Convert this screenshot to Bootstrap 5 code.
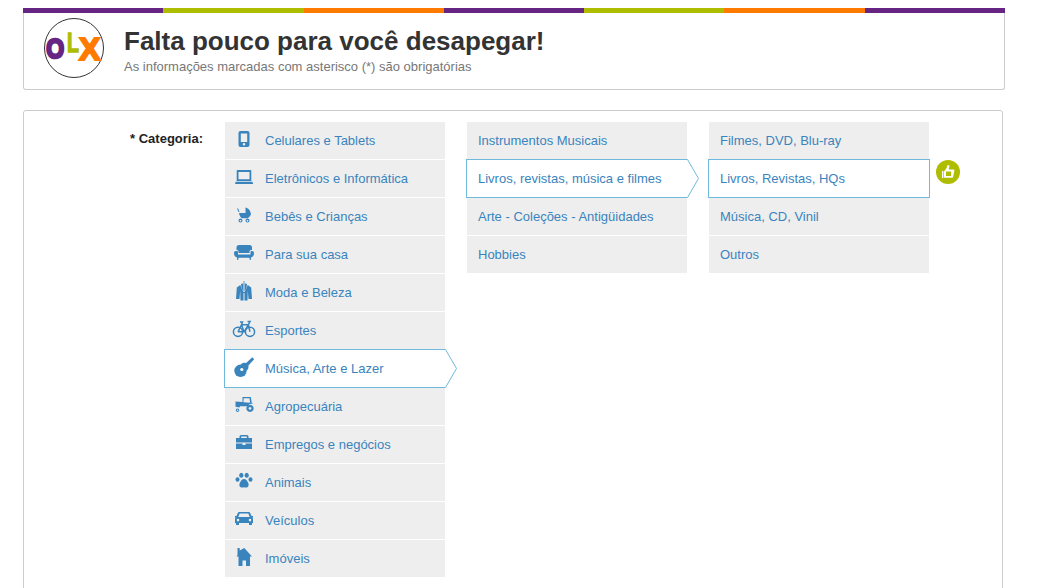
<!DOCTYPE html>
<html lang="pt-BR">

<head>
    <meta charset="UTF-8">
    <meta name="viewport" content="width=device-width, initial-scale=1.0">
    <title>Falta pouco para você desapegar!</title>
    <link href="https://cdn.jsdelivr.net/npm/bootstrap@5.3.0/dist/css/bootstrap.min.css" rel="stylesheet">
    <style>
        body {
            font-family: "Liberation Sans", Arial, sans-serif;
            font-size: 13px;
            color: #333;
            background: #fff;
        }

        .page-wrap {
            width: 982px;
            height: 580px;
            margin: 8px 0 0 23px;
            overflow: hidden;
        }

        .top-panel {
            width: 982px;
            height: 77px;
            border: 1px solid #ccc;
            border-top: 0;
            border-radius: 0 0 3px 3px;
        }

        .color-bar {
            height: 5px;
        }

        .color-bar span {
            flex: 1;
        }

        .c-purple { background: #662483; }
        .c-green { background: #afbd00; }
        .c-orange { background: #ff7b00; }

        .logo-svg {
            margin: 5px 0 0 20px;
        }

        .logo-svg text {
            font-family: "Liberation Sans", Arial, sans-serif;
            font-weight: 700;
        }

        .head-text {
            margin-left: 20px;
            padding-top: 10px;
        }

        .head-text h1 {
            font-size: 26px;
            line-height: 36px;
            font-weight: 700;
            color: #333;
            margin: 0;
        }

        .head-text p {
            font-size: 13px;
            line-height: 16px;
            color: #777;
            margin: 0;
        }

        .form-panel {
            width: 980px;
            height: 600px;
            margin-top: 20px;
            padding-top: 11px;
            border: 1px solid #ccc;
            border-radius: 3px;
            gap: 22px;
        }

        .cat-label {
            width: 179px;
            padding-top: 9px;
            font-size: 13px;
            line-height: 16px;
            font-weight: 700;
            color: #222;
            text-align: right;
        }

        .cat-list {
            width: 220px;
            border-radius: 0;
        }

        .cat-list .list-group-item {
            height: 37px;
            margin: 0 0 1px;
            padding: 6px 0 0 11px;
            border: 0;
            border-radius: 0;
            background: #eee;
            color: #3a84bd;
            font-size: 13px;
            line-height: 26px;
        }

        .cat-list.with-icons .list-group-item {
            padding-left: 7px;
        }

        .cat-list .list-group-item svg.cat-icon {
            flex: none;
            margin-right: 9px;
            fill: #3a84bd;
        }

        .cat-list .list-group-item.picked {
            height: 39px;
            margin: -1px 0 0 -1px;
            width: 221px;
            background: #fff;
            border: 1px solid #6fb9dc;
            border-right: 0;
            z-index: 2;
        }

        .cat-list .list-group-item.picked.closed {
            width: 222px;
            border-right: 1px solid #6fb9dc;
        }

        .item-arrow {
            position: absolute;
            top: -1px;
            left: 100%;
        }

        .done-badge {
            position: absolute;
            top: 0;
            left: 100%;
            margin-left: 7px;
        }
    </style>
</head>

<body>
    <div class="page-wrap">
        <!-- Header -->
        <div class="color-bar d-flex">
            <span class="c-purple"></span><span class="c-green"></span><span class="c-orange"></span><span class="c-purple"></span><span class="c-green"></span><span class="c-orange"></span><span class="c-purple"></span>
        </div>
        <div class="top-panel d-flex align-items-start">
            <svg class="logo-svg" width="60" height="60" viewBox="0 0 60 60">
                <circle cx="30" cy="30" r="29.500" fill="#fff" stroke="#333" stroke-width="1" />
                <text transform="translate(2.200 39.500) scale(.82 1)" font-size="28" fill="#662483" stroke="#662483" stroke-width="2.600">O</text>
                <text transform="translate(23 33.800) scale(.72 1)" font-size="27" fill="#afbd00" stroke="#afbd00" stroke-width="1.400">L</text>
                <text x="35" y="41.500" font-size="32" fill="#ff7b00" stroke="#ff7b00" stroke-width="2">X</text>
            </svg>
            <div class="head-text">
                <h1>Falta pouco para você desapegar!</h1>
                <p>As informações marcadas com asterisco (*) são obrigatórias</p>
            </div>
        </div>

        <!-- Categories -->
        <div class="form-panel d-flex align-items-start">
            <div class="cat-label">* Categoria:</div>

            <div class="cat-list with-icons list-group">
                <a href="#" class="list-group-item d-flex">
                    <svg class="cat-icon" width="24" height="24" viewBox="0 0 24 24"><path fill-rule="evenodd" d="M8.500 3h7a2 2 0 0 1 2 2v12a2 2 0 0 1-2 2h-7a2 2 0 0 1-2-2V5a2 2 0 0 1 2-2zm.3 2.500v8.500h6.400V5.500zM12 15a1.300 1.300 0 1 0 0 2.600a1.300 1.300 0 0 0 0-2.600z" /></svg>
                    Celulares e Tablets
                </a>
                <a href="#" class="list-group-item d-flex">
                    <svg class="cat-icon" width="24" height="24" viewBox="0 0 24 24"><path fill-rule="evenodd" d="M5.500 4h13a.8.8 0 0 1 .8.8V15H4.700V4.800a.8.8 0 0 1 .8-.8zm1 2V13.300h11V6zM3.700 15.800h16.700l.8 2.200H3z" /></svg>
                    Eletrônicos e Informática
                </a>
                <a href="#" class="list-group-item d-flex">
                    <svg class="cat-icon" width="24" height="24" viewBox="0 0 24 24"><path d="M5 4.500h1.200l1.300 3.500h-1zM7 9h6.500V3.500c2.600.5 5 2.800 5 5.500h.5c0 3-2.300 5.300-5.500 5.300h-2C8.700 14.300 7.500 12 7 9z" /><path fill-rule="evenodd" d="M8.500 14.600a2 2 0 1 0 .01 0zm0 1.300a.8.8 0 1 1-.01 0zM15.500 14.600a2 2 0 1 0 .01 0zm0 1.300a.8.8 0 1 1-.01 0z" /></svg>
                    Bebês e Crianças
                </a>
                <a href="#" class="list-group-item d-flex">
                    <svg class="cat-icon" width="24" height="24" viewBox="0 0 24 24"><path d="M7 3h10.500a2.500 2.500 0 0 1 2.500 2.500V8h-1c-1 0-1.500.8-1.500 2v1H6.500v-1c0-1.200-.5-2-1.500-2H4.500V5.500A2.500 2.500 0 0 1 7 3z" /><path d="M4 9h1c.6 0 1 .5 1 1.200V12.500h12.500V10.200c0-.7.4-1.200 1-1.200h.5c1.300 0 2 .7 2 2c0 2.300-1 4-3 4.500l-.2 2.500h-1l-.4-2.300H6.600L6.200 18h-1L5 15.500C3 15 2 13.300 2 11c0-1.300.7-2 2-2z" /></svg>
                    Para sua casa
                </a>
                <a href="#" class="list-group-item d-flex">
                    <svg class="cat-icon" width="24" height="24" viewBox="0 0 24 24"><path d="M11.600 1h.8v2.500h-.8z" /><path d="M9 4l2.500-.8v8.300H11L9.500 8zM15 4l-2.500-.8v8.300h.5L14.500 8z" /><path d="M8.300 5L4.800 7.500 4 19h3.500l.7-8.500.3 10h3V13h1v7.500h3l.3-10 .7 8.500H20L19.200 7.500 15.700 5 14 9.500 12.700 12h-1.400L10 9.500z" /></svg>
                    Moda e Beleza
                </a>
                <a href="#" class="list-group-item d-flex">
                    <svg class="cat-icon" width="24" height="24" viewBox="0 0 24 24"><g fill="none" stroke="#3a84bd" stroke-width="1.500"><circle cx="6" cy="13.800" r="4.600" /><circle cx="18" cy="13.800" r="4.600" /><path d="M6 13.800L9.500 6.800H16.300L18 13.800M9.500 6.800L12 13.800H6M12 13.800L16.300 6.800M8 4H10.500L9.500 6.800M15.500 3.500H18L16.300 6.800" /></g></svg>
                    Esportes
                </a>
                <a href="#" class="list-group-item picked d-flex position-relative">
                    <svg class="cat-icon" width="24" height="24" viewBox="0 0 24 24"><path d="M20.300 1.300l1.900 1.900-7 7.500-2.400-2.400z" /><circle cx="12.500" cy="10.800" r="4" /><circle cx="8.500" cy="14.800" r="6.200" /><circle cx="9.800" cy="13.500" r="1.600" fill="#fff" /></svg>
                    Música, Arte e Lazer
                    <svg class="item-arrow" width="12" height="39" viewBox="0 0 12 39"><path d="M0 .5H.5L11.500 19.500L.5 38.500H0" fill="#fff" stroke="#6fb9dc" /></svg>
                </a>
                <a href="#" class="list-group-item d-flex">
                    <svg class="cat-icon" width="24" height="24" viewBox="0 0 24 24"><path fill-rule="evenodd" d="M10.500 3h8.300l1 6c.8.300 1.200.6 1.700 1.200-2.200-1-4.700-.2-5.500 2H8l-.5 1.300-4-.8V7.500l7 .5zm1.200 1.300l-.3 3.900 6.700.5-.6-4.400z" /><path fill-rule="evenodd" d="M18 10.800a3.600 3.600 0 1 0 .01 0zm0 2.200a1.400 1.400 0 1 1-.01 0zM5.500 14.500a1.700 1.700 0 1 0 .01 0zm0 1a.7.7 0 1 1-.01 0z" /></svg>
                    Agropecuária
                </a>
                <a href="#" class="list-group-item d-flex">
                    <svg class="cat-icon" width="24" height="24" viewBox="0 0 24 24"><path fill-rule="evenodd" d="M9 3h6a1.500 1.500 0 0 1 1.500 1.500V6H20v4.500H4V6h3.500V4.500A1.500 1.500 0 0 1 9 3zm.2 1.400V6h5.600V4.400zM4 11.500h6.500V13h3v-1.500H20V17H4z" /></svg>
                    Empregos e negócios
                </a>
                <a href="#" class="list-group-item d-flex">
                    <svg class="cat-icon" width="24" height="24" viewBox="0 0 24 24"><ellipse cx="9.300" cy="5.300" rx="2.100" ry="2.500" /><ellipse cx="14.700" cy="5.300" rx="2.100" ry="2.500" /><ellipse cx="5.500" cy="9.500" rx="2" ry="2.300" /><ellipse cx="18.500" cy="9.500" rx="2" ry="2.300" /><path d="M12 9c2 0 3 1.700 4 3.500 1 1.700 1 4.500-1.500 5-1 .2-1.700-.3-2.500-.3s-1.500.5-2.500.3C7 17 7 14.200 8 12.500 9 10.700 10 9 12 9z" /></svg>
                    Animais
                </a>
                <a href="#" class="list-group-item d-flex">
                    <svg class="cat-icon" width="24" height="24" viewBox="0 0 24 24"><path fill-rule="evenodd" d="M7.500 4h9c.8 0 1.500.5 1.800 1.300L19.500 8H21v1.500h-.7c.5.500.7 1 .7 1.800V15h-1v2h-3v-2H7v2H4v-2H3v-3.700c0-.8.2-1.300.7-1.800H3V8h1.500l1.200-2.700C6 4.500 6.700 4 7.500 4zm.2 1.500L6.300 9h11.400l-1.400-3.500zM6 10.800a1.300 1.300 0 1 0 0 2.600a1.300 1.300 0 0 0 0-2.600zm12 0a1.300 1.300 0 1 0 0 2.600a1.300 1.300 0 0 0 0-2.600z" /></svg>
                    Veículos
                </a>
                <a href="#" class="list-group-item d-flex">
                    <svg class="cat-icon" width="24" height="24" viewBox="0 0 24 24"><path d="M5.500 2h2.200v2.500L12.300 2 20 10.500h-2V20h-4v-5.500h-3.500V20h-4V10.500H4.500L5.500 9z" /></svg>
                    Imóveis
                </a>
            </div>

            <div class="cat-list list-group">
                <a href="#" class="list-group-item">Instrumentos Musicais</a>
                <a href="#" class="list-group-item picked position-relative">Livros, revistas, música e filmes
                    <svg class="item-arrow" width="12" height="39" viewBox="0 0 12 39"><path d="M0 .5H.5L11.500 19.500L.5 38.500H0" fill="#fff" stroke="#6fb9dc" /></svg>
                </a>
                <a href="#" class="list-group-item">Arte - Coleções - Antigüidades</a>
                <a href="#" class="list-group-item">Hobbies</a>
            </div>

            <div class="cat-list list-group">
                <a href="#" class="list-group-item">Filmes, DVD, Blu-ray</a>
                <a href="#" class="list-group-item picked closed position-relative">Livros, Revistas, HQs
                    <svg class="done-badge" width="24" height="24" viewBox="0 0 24 24"><circle cx="12" cy="12" r="12" fill="#afbd00" /><path d="M11.500 5l2 .6-.8 3.900h4.800c.8 0 1.100.8.800 1.500l-1.200 6c-.1.500-.5.800-1 .8H9c-.6 0-1-.4-1-1v-5.300c1.800-1.800 3-3.800 3.500-6.500z" fill="#fff" /><path d="M6 11h1.300v7H6z" fill="#fff" /><path d="M10 11.500h5v4.500h-5z" fill="#afbd00" /></svg>
                </a>
                <a href="#" class="list-group-item">Música, CD, Vinil</a>
                <a href="#" class="list-group-item">Outros</a>
            </div>
        </div>
    </div>

    <script src="https://cdn.jsdelivr.net/npm/bootstrap@5.3.0/dist/js/bootstrap.bundle.min.js"></script>
</body>

</html>
